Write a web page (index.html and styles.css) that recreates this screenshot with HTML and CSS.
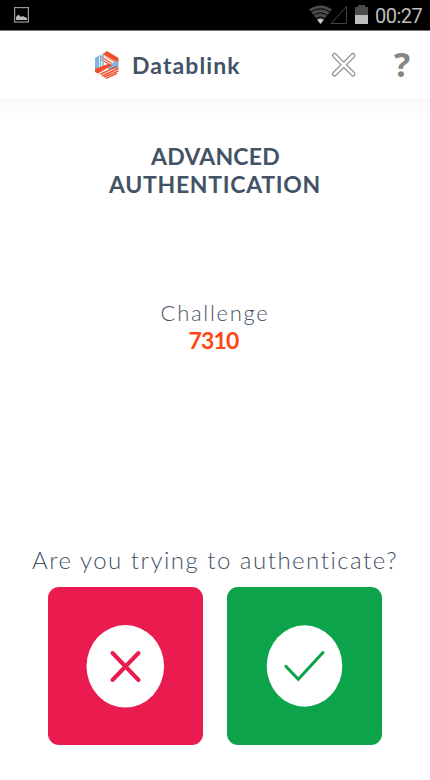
FILE: index.html
```html
<!DOCTYPE html>
<html lang="en">
<head>
<meta charset="utf-8">
<title>Datablink</title>
<link rel="stylesheet" href="styles.css">
</head>
<body>
<div class="status">
  <svg class="status-photo" width="15" height="16" viewBox="0 0 15 16"><rect x=".6" y=".6" width="13.8" height="14.4" fill="none" stroke="#999" stroke-width="1.2"/><path d="M2 13V10L4.5 7.5L7 10L8.5 9L13 11V13Z" fill="#bbb"/></svg>
  <svg class="status-icons" width="62" height="22" viewBox="0 0 62 22">
    <path d="M0 4.500Q11.500 -3.500 23 4.500L11.500 18.500Z" fill="#4b4b4b"/>
    <path d="M1.500 7.200Q11.500 .3 21.500 7.200M4 10.600Q11.500 5.200 19 10.600M6.500 14Q11.500 10 16.500 14" fill="none" stroke="#000" stroke-width="1"/>
    <path d="M8.300 15Q11.500 13 14.700 15L11.500 19Z" fill="#ccc"/>
    <path d="M22 18.500L37.500 1.500V18.500Z" fill="none" stroke="#444"/>
    <path d="M46 2H49V0H56V2H59V10H46Z" fill="#4b4b4b"/><path d="M46 10H59V19H46Z" fill="#bebebe"/>
  </svg>
  <span class="clock">00:27</span>
</div>
<header class="header">
  <svg class="logo" width="24" height="28" viewBox="0 0 24 28">
    <path d="M7 3.500L12 0L23.500 7V11L20 12Z" fill="#f04e2b"/>
    <path d="M5 5L17 12.500M5 8L14 13" stroke="#f04e2b" stroke-width="1.300"/>
    <path d="M8 5L20 12M8 3.500L21 11" stroke="#fff" stroke-width=".6"/>
    <path d="M0 7L4 4.500V17L0 19Z" fill="#7fb2dc"/>
    <path d="M5.500 3.800V16M8 3V15" stroke="#7fb2dc" stroke-width="1.500"/>
    <path d="M11 15.500L23.500 9V17L14 19Z" fill="#7fb2dc"/>
    <path d="M0 18L14 12.500L17 14.500L3 22.500L0 21Z" fill="#f04e2b"/>
    <path d="M5 23.300L22 15.500M7 25L23.500 17.500M9 26.200L23.500 19.800M11 27.300L22 22.400" stroke="#f04e2b" stroke-width="1.400"/>
  </svg>
  <span class="brand">Datablink</span>
  <svg class="close" width="26" height="26" viewBox="0 0 26 26"><path d="M3.500 3.500L22 22M22 3.500L3.500 22" stroke="#858585" stroke-width="5" stroke-linecap="round"/><path d="M3.500 3.500L22 22M22 3.500L3.500 22" stroke="#fff" stroke-width="2.800" stroke-linecap="round"/></svg>
  <span class="help">?</span>
</header>
<main class="main">
  <h1 class="title"><span class="t1">ADVANCED</span><br><span class="t2">AUTHENTICATION</span></h1>
  <div class="challenge"><div class="label">Challenge</div><div class="code">7310</div></div>
  <p class="question">Are you trying to authenticate?</p>
  <div class="actions">
    <button class="action deny" aria-label="No"><svg width="155" height="158" viewBox="0 0 155 158"><ellipse cx="77.300" cy="79.300" rx="38.800" ry="41.300" fill="#fff"/><path d="M64.500 66L90.500 93M90.500 66L64.500 93" stroke="#e91b4f" stroke-width="4" stroke-linecap="round"/></svg></button>
    <button class="action accept" aria-label="Yes"><svg width="155" height="158" viewBox="0 0 155 158"><ellipse cx="77.500" cy="79" rx="37.800" ry="40.700" fill="#fff"/><path d="M58.800 79.300L71.300 92.300L96 65.500" fill="none" stroke="#0da34b" stroke-width="3" stroke-linecap="round"/></svg></button>
  </div>
</main>
</body>
</html>
```
FILE: styles.css
```css
* { box-sizing: border-box; }
body { margin: 0; width: 430px; height: 780px; overflow: hidden; background: #fff; color: #435365; font-family: Lato, sans-serif; }
svg { display: block; flex: none; overflow: visible; }
.status { height: 31px; background: #000; border-bottom: 1px solid #777; display: flex; align-items: flex-start; }
.status-photo { margin: 7px 0 0 14px; }
.status-icons { margin: 5px 0 0 280px; }
.clock { margin: 4px 0 0 4px; font: 20px/24px Roboto, sans-serif; letter-spacing: -.5px; color: #bebebe; }
.header { height: 68px; display: flex; align-items: flex-start; }
.logo { margin: 20px 0 0 95px; }
.brand { margin: 20px 0 0 13px; width: 112px; font-size: 23px; line-height: 28px; font-weight: 700; letter-spacing: 1.1px; }
.close { margin: 21px 0 0 87px; }
.help { margin: 12px 0 0 37px; font: 700 34px/42px "Open Sans", sans-serif; color: #858585; }
.main { height: 681px; padding-top: 43px; text-align: center; background: linear-gradient(#f8f8f8, #fff 20px); }
.title { margin: 0; height: 157px; font-size: 23px; line-height: 28px; font-weight: 700; }
.t1 { margin-left: 1px; letter-spacing: .2px; }
.t2 { letter-spacing: .7px; }
.challenge { height: 247px; line-height: 27px; }
.label { font-size: 22px; font-weight: 300; letter-spacing: 1.7px; }
.code { padding-right: 3px; font-size: 23px; line-height: 28px; font-weight: 700; letter-spacing: -.8px; color: #ff4713; }
.question { margin: 0; height: 41px; font-size: 24px; line-height: 28px; font-weight: 300; letter-spacing: 1.5px; white-space: nowrap; }
.actions { display: flex; gap: 24px; padding-left: 48px; }
.action { width: 155px; height: 158px; padding: 0; border: 0; border-radius: 11px; }
.deny { background: #e91b4f; }
.accept { background: #0da34b; }
```
